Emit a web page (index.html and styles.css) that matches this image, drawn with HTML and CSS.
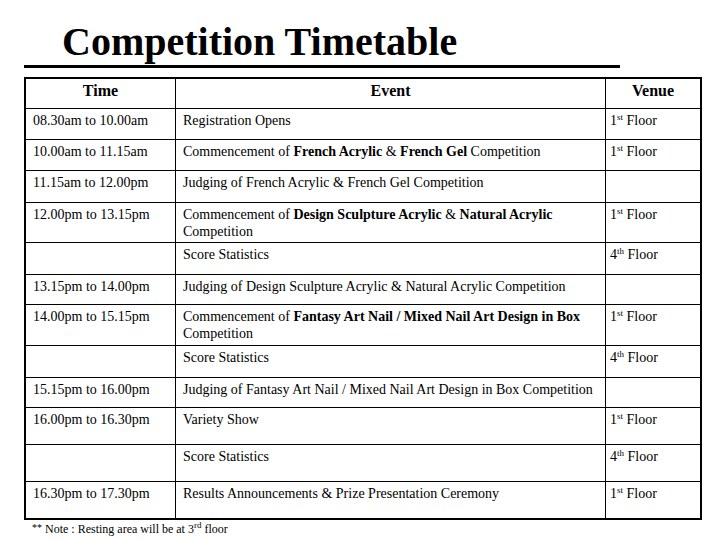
FILE: index.html
```html
<!DOCTYPE html>
<html lang="en">
<head>
<meta charset="utf-8">
<title>Competition Timetable</title>
<link rel="stylesheet" href="styles.css">
</head>
<body>
<main class="page">
  <h1 class="title">Competition Timetable</h1>
  <table class="timetable">
    <colgroup>
      <col class="c-time">
      <col class="c-event">
      <col class="c-venue">
    </colgroup>
    <thead>
      <tr class="h-head">
        <th>Time</th>
        <th>Event</th>
        <th class="venue">Venue</th>
      </tr>
    </thead>
    <tbody>
      <tr class="h30">
        <td>08.30am to 10.00am</td>
        <td>Registration Opens</td>
        <td class="venue">1<sup class="ord">st</sup> Floor</td>
      </tr>
      <tr class="h30">
        <td>10.00am to 11.15am</td>
        <td>Commencement of <b>French Acrylic</b> &amp; <b>French Gel</b> Competition</td>
        <td class="venue">1<sup class="ord">st</sup> Floor</td>
      </tr>
      <tr class="h31">
        <td>11.15am to 12.00pm</td>
        <td>Judging of French Acrylic &amp; French Gel Competition</td>
        <td class="venue"></td>
      </tr>
      <tr class="h39">
        <td>12.00pm to 13.15pm</td>
        <td>Commencement of <b>Design Sculpture Acrylic</b> &amp; <b>Natural Acrylic</b> Competition</td>
        <td class="venue">1<sup class="ord">st</sup> Floor</td>
      </tr>
      <tr class="h31">
        <td></td>
        <td>Score Statistics</td>
        <td class="venue">4<sup class="ord">th</sup> Floor</td>
      </tr>
      <tr class="h29">
        <td>13.15pm to 14.00pm</td>
        <td>Judging of Design Sculpture Acrylic &amp; Natural Acrylic Competition</td>
        <td class="venue"></td>
      </tr>
      <tr class="h40">
        <td>14.00pm to 15.15pm</td>
        <td>Commencement of <b>Fantasy Art Nail / Mixed Nail Art Design in Box</b> Competition</td>
        <td class="venue">1<sup class="ord">st</sup> Floor</td>
      </tr>
      <tr class="h31">
        <td></td>
        <td>Score Statistics</td>
        <td class="venue">4<sup class="ord">th</sup> Floor</td>
      </tr>
      <tr class="h29">
        <td>15.15pm to 16.00pm</td>
        <td>Judging of Fantasy Art Nail / Mixed Nail Art Design in Box Competition</td>
        <td class="venue"></td>
      </tr>
      <tr class="h36">
        <td>16.00pm to 16.30pm</td>
        <td>Variety Show</td>
        <td class="venue">1<sup class="ord">st</sup> Floor</td>
      </tr>
      <tr class="h36">
        <td></td>
        <td>Score Statistics</td>
        <td class="venue">4<sup class="ord">th</sup> Floor</td>
      </tr>
      <tr class="h35 last">
        <td>16.30pm to 17.30pm</td>
        <td>Results Announcements &amp; Prize Presentation Ceremony</td>
        <td class="venue">1<sup class="ord">st</sup> Floor</td>
      </tr>
    </tbody>
  </table>
  <p class="note"><span class="stars">**</span> Note : Resting area will be at 3<sup class="ord">rd</sup> floor</p>
</main>
</body>
</html>
```
FILE: styles.css
```css
html, body {
  margin: 0;
  padding: 0;
  background: #ffffff;
}

body {
  color: #000000;
  font-family: "Liberation Serif", "Times New Roman", serif;
  width: 720px;
  height: 540px;
  overflow: hidden;
}

.page {
  padding-left: 24px;
}

.title {
  margin: 0;
  padding: 19px 0 0 38px;
  width: 558px;
  font-family: "Liberation Serif", "Times New Roman", serif;
  font-size: 40px;
  line-height: 46px;
  font-weight: 700;
  border-bottom: 3px solid #000;
}

.timetable {
  margin-top: 9px;
  width: 678px;
  table-layout: fixed;
  border-collapse: separate;
  border-spacing: 0;
  border: 2px solid #000;
  font-size: 14px;
  line-height: 17px;
}

.c-time { width: 150px; }
.c-event { width: 430px; }
.c-venue { width: 94px; }

.timetable th,
.timetable td {
  vertical-align: top;
  padding: 3px 2px 0 7px;
  border-right: 1px solid #000;
  border-bottom: 1px solid #000;
  text-align: left;
}

.timetable td {
  font-weight: 400;
}

.timetable th {
  font-size: 16px;
  line-height: 19px;
  font-weight: 700;
  text-align: center;
  padding: 2px 0 0 0;
}

.timetable b {
  font-weight: 700;
}

.timetable th.venue,
.timetable td.venue {
  border-right: none;
}

.timetable td.venue {
  padding-left: 4px;
}

.timetable tr.last td {
  border-bottom: none;
}

.h-head { height: 30px; }
.h29 { height: 30px; }
.h30 { height: 31px; }
.h31 { height: 32px; }
.h35 { height: 36px; }
.h36 { height: 37px; }
.h39 { height: 40px; }
.h40 { height: 41px; }

.ord {
  font-size: 9px;
  line-height: 0;
  vertical-align: 5px;
}

.note {
  margin: 1px 0 0 8px;
  font-size: 12px;
  line-height: 14px;
}

.stars {
  font-size: 10px;
  vertical-align: 2px;
}
```
